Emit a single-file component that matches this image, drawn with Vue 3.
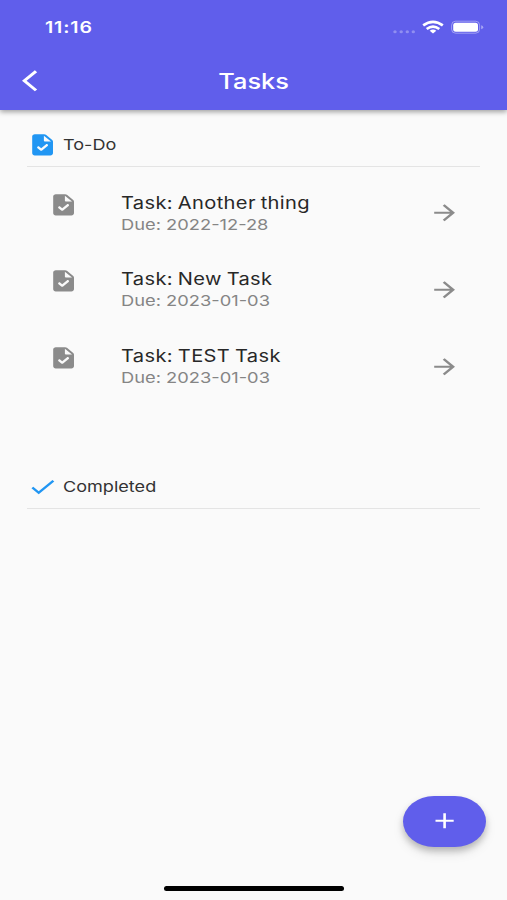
<script setup>
const taskIcon =
  'M14.59 2.59c-.38-.38-.89-.59-1.42-.59H6c-1.1 0-2 .9-2 2v16c0 1.1.89 2 1.99 2H18c1.1 0 2-.9 2-2V8.83c0-.53-.21-1.04-.59-1.41l-4.82-4.83zM10.23 17.29l-2.12-2.12c-.39-.39-.39-1.02 0-1.41.39-.39 1.02-.39 1.41 0l1.41 1.41 3.54-3.54c.39-.39 1.02-.39 1.41 0 .39.39.39 1.02 0 1.41l-4.24 4.24c-.39.4-1.02.4-1.41.01zM14 9c-.55 0-1-.45-1-1V3.5L18.5 9H14z'

const tasks = [
  { title: 'Another thing', due: '2022-12-28' },
  { title: 'New Task', due: '2023-01-03' },
  { title: 'TEST Task', due: '2023-01-03' },
]
</script>

<template>
  <div class="screen">
    <header class="header">
      <div class="status">
        <span class="time wide">11:16</span>
        <svg class="indicators" width="92" height="16" viewBox="0 0 92 16">
          <g fill="#fff" opacity=".3">
            <ellipse cx="3" cy="11.7" rx="1.7" ry="1.5" />
            <ellipse cx="9.2" cy="11.7" rx="1.7" ry="1.5" />
            <ellipse cx="15.3" cy="11.7" rx="1.7" ry="1.5" />
            <ellipse cx="21.3" cy="11.7" rx="1.7" ry="1.5" />
          </g>
          <g fill="none" stroke="#fff" stroke-width="2.7">
            <path d="M31.2 5.4Q41 -1.8 50.8 5.4" />
            <path d="M34.7 9Q41 4.1 47.3 9" />
          </g>
          <path d="M37.7 10.7Q41 8.3 44.3 10.7L41 13.5z" fill="#fff" />
          <rect x="59.6" y="1.2" width="28" height="12" rx="4" fill="none" stroke="#fff" stroke-opacity=".4" />
          <rect x="61.2" y="2.7" width="24.8" height="9" rx="2.5" fill="#fff" />
          <path d="M89.2 5.2q2 .6 2 2t-2 2z" fill="#fff" opacity=".45" />
        </svg>
      </div>
      <div class="bar">
        <svg class="icon back" viewBox="0 0 24 24" preserveAspectRatio="none">
          <path d="M11.67 3.87 9.9 2.1 0 12l9.9 9.9 1.77-1.77L3.54 12z" />
        </svg>
        <h1 class="wide">Tasks</h1>
      </div>
    </header>

    <main class="content">
      <section class="todo">
        <div class="section-head">
          <svg class="icon" viewBox="0 0 24 24" preserveAspectRatio="none"><path :d="taskIcon" /></svg>
          <h2 class="wide">To-Do</h2>
        </div>
        <ul>
          <li v-for="task in tasks" :key="task.title">
            <svg class="icon" viewBox="0 0 24 24" preserveAspectRatio="none"><path :d="taskIcon" /></svg>
            <div class="text">
              <span class="title wide">Task: {{ task.title }}</span>
              <span class="due wide">Due: {{ task.due }}</span>
            </div>
            <svg class="icon arrow" viewBox="0 0 24 24" preserveAspectRatio="none">
              <path d="m12 4-1.41 1.41L16.17 11H4v2h12.17l-5.58 5.59L12 20l8-8z" />
            </svg>
          </li>
        </ul>
      </section>
      <section>
        <div class="section-head">
          <svg class="icon" viewBox="0 0 24 24" preserveAspectRatio="none">
            <path d="M9 16.17 4.83 12l-1.42 1.41L9 19 21 7l-1.41-1.41z" />
          </svg>
          <h2 class="wide">Completed</h2>
        </div>
      </section>
    </main>

    <footer class="footer">
      <button class="fab" aria-label="Add task">
        <svg class="icon" viewBox="0 0 24 24" preserveAspectRatio="none">
          <path d="M19 13h-6v6h-2v-6H5v-2h6V5h2v6h6z" />
        </svg>
      </button>
      <div class="home"></div>
    </footer>
  </div>
</template>

<style>
body {
  margin: 0;
}
</style>

<style scoped>
.screen {
  width: 507px;
  height: 900px;
  display: flex;
  flex-direction: column;
  overflow: hidden;
  background: #fafafa;
  font-family: Inter, 'Liberation Sans', sans-serif;
}
.wide {
  display: block;
  width: max-content;
  white-space: nowrap;
  transform: scaleX(1.22);
  transform-origin: left center;
}
.icon {
  display: block;
  flex: none;
  width: 31.2px;
  height: 25.6px;
  fill: currentColor;
}
.header {
  flex: none;
  height: 110.4px;
  background: #605eeb;
  color: #fff;
  box-shadow: 0 2px 5px rgba(0, 0, 0, 0.36);
}
.status {
  display: flex;
  justify-content: space-between;
  height: 51px;
  padding: 0 23px 0 44.6px;
}
.time {
  margin-top: 17px;
  font-size: 16px;
  line-height: 21px;
  font-weight: 600;
  letter-spacing: 0.7px;
}
.indicators {
  margin-top: 20px;
}
.bar {
  display: grid;
  grid-template-columns: 1fr auto 1fr;
  align-items: center;
  height: 59px;
  padding: 0 22px;
}
.bar h1 {
  margin: 0;
  font-size: 21.3px;
  line-height: 26px;
  font-weight: 500;
  transform: scaleX(1.19);
  transform-origin: center;
}
.content {
  flex: 1;
  padding: 0 27px;
}
.todo {
  height: 342px;
}
.section-head {
  display: flex;
  align-items: center;
  height: 56.6px;
  box-sizing: border-box;
  padding-top: 13px;
  border-bottom: 1px solid #e4e4e4;
  color: #2196f3;
}
.section-head h2 {
  margin: 0 0 0 4.7px;
  font-size: 15px;
  line-height: 20px;
  font-weight: 400;
  color: #333;
  transform: scaleX(1.205);
}
ul {
  margin: 0;
  padding: 7.7px 20px 0 20.8px;
  list-style: none;
}
li {
  display: flex;
  align-items: flex-start;
  height: 76.7px;
  box-sizing: border-box;
  padding-top: 17px;
  color: #8b8b8b;
}
.text {
  flex: 1;
  margin-left: 41.6px;
}
.title {
  font-size: 17px;
  line-height: 22px;
  letter-spacing: 0.3px;
  word-spacing: -1px;
  color: #282828;
  transform: scaleX(1.182);
}
.due {
  font-size: 15px;
  line-height: 22px;
  color: #858585;
}
.arrow {
  margin-top: 8.5px;
}
.footer {
  flex: none;
  display: flex;
  flex-direction: column;
  align-items: center;
  height: 104.5px;
}
.fab {
  align-self: flex-end;
  display: flex;
  align-items: center;
  justify-content: center;
  width: 83.2px;
  height: 51.2px;
  margin-right: 20.8px;
  padding: 0;
  border: 0;
  border-radius: 31.2px / 25.6px;
  background: #605eeb;
  color: #fff;
  box-shadow: 0 4px 6px rgba(0, 0, 0, 0.2), 0 6px 12px rgba(0, 0, 0, 0.1);
}
.home {
  width: 180px;
  height: 5.5px;
  margin-top: 39.3px;
  border-radius: 3px;
  background: #000;
}
</style>
